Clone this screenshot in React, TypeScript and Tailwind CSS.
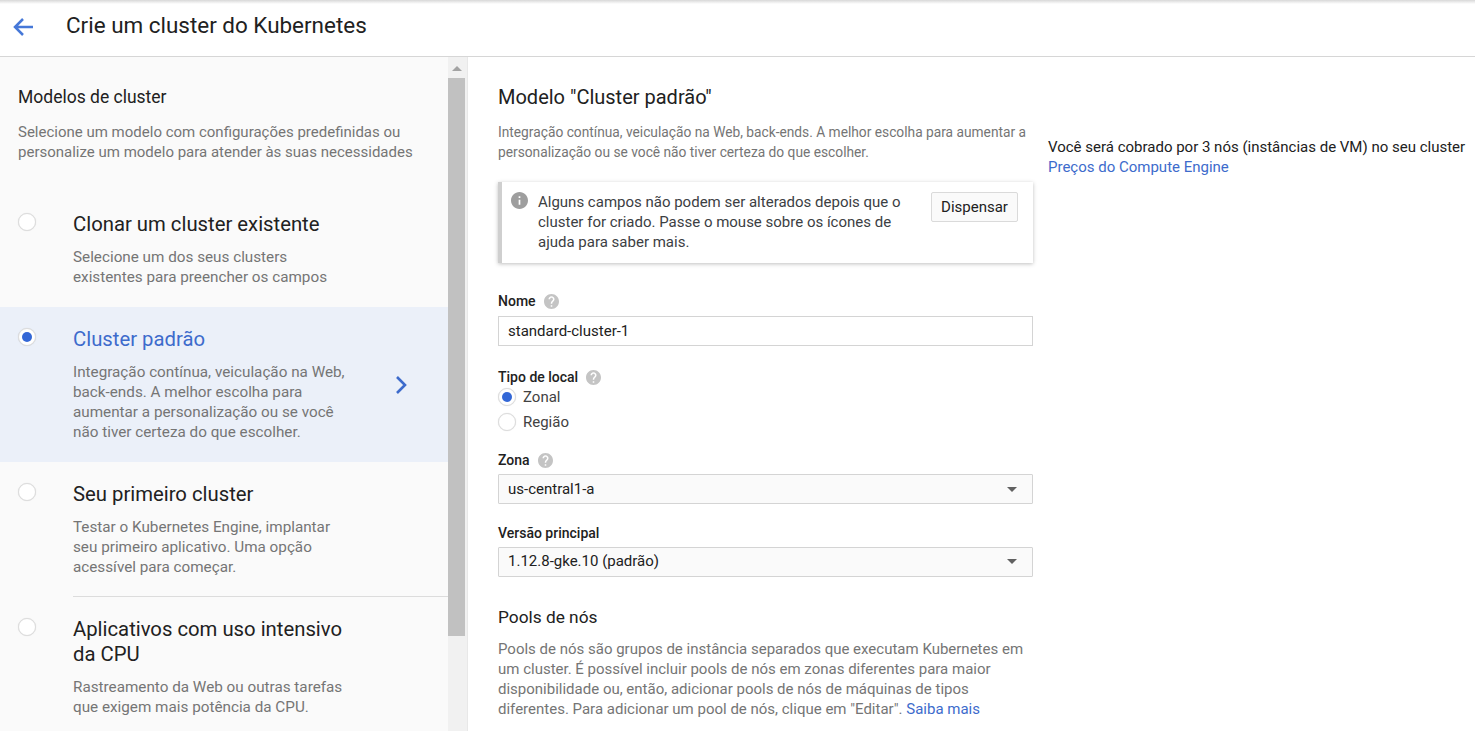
import React from "react";

const HELP = "M12 2C6.48 2 2 6.48 2 12s4.48 10 10 10 10-4.48 10-10S17.52 2 12 2zm1 17h-2v-2h2v2zm2.07-7.75l-.9.92C13.45 12.9 13 13.5 13 15h-2v-.5c0-1.1.45-2.1 1.17-2.83l1.24-1.26c.37-.36.59-.86.59-1.41 0-1.1-.9-2-2-2s-2 .9-2 2H8c0-2.21 1.79-4 4-4s4 1.79 4 4c0 .88-.36 1.68-.93 2.25z";
const INFO = "M12 2C6.48 2 2 6.48 2 12s4.48 10 10 10 10-4.48 10-10S17.52 2 12 2zm1 15h-2v-6h2v6zm0-8h-2V7h2v2z";

function Radio({ on }: { on?: boolean }) {
  return (
    <span className="flex h-[18px] w-[18px] shrink-0 items-center justify-center rounded-full border border-[#dcdcdc] bg-white shadow-[0_0_1px_rgba(0,0,0,0.15)]">
      {on && <span className="h-[10px] w-[10px] rounded-full bg-[#3367d6]" />}
    </span>
  );
}

function Help() {
  return (
    <svg viewBox="2 2 20 20" className="ml-2 h-[15px] w-[15px] fill-[#c4c4c4]">
      <path d={HELP} />
    </svg>
  );
}

function Label({ children, help, className }: { children: React.ReactNode; help?: boolean; className: string }) {
  return (
    <div className={`flex h-5 items-center text-[14px] font-medium leading-5 text-[#212121] ${className}`}>
      {children}
      {help && <Help />}
    </div>
  );
}

function Select({ value, className }: { value: string; className: string }) {
  return (
    <div className={`flex h-[30px] items-center justify-between rounded-[1px] border border-[#d4d4d4] bg-[#fafafa] pl-[9px] pr-[15px] text-[15px] text-[#212121] ${className}`}>
      <span>{value}</span>
      <span className="h-0 w-0 border-x-[5px] border-t-[5px] border-x-transparent border-t-[#616161]" />
    </div>
  );
}

function Item({
  title,
  desc,
  active,
  chevron,
  className = "",
}: {
  title: React.ReactNode;
  desc: React.ReactNode;
  active?: boolean;
  chevron?: boolean;
  className?: string;
}) {
  return (
    <div className={`flex items-stretch pl-[18px] pt-5 ${active ? "bg-[#ebf0f9]" : ""} ${className}`}>
      <div className="pt-[1px]">
        <Radio on={active} />
      </div>
      <div className="ml-[37px]">
        <div className={`text-[20.3px] leading-[25px] ${active ? "text-[#3d6bcc]" : "text-[#212121]"}`}>{title}</div>
        <p className="mt-[10px] text-[15.25px] leading-5 text-[#757575]">{desc}</p>
      </div>
      {chevron && (
        <div className="ml-auto mr-[39px] flex items-center">
          <svg width="16" height="20" viewBox="0 0 16 20" fill="none" stroke="#3d6bcc" strokeWidth="2.6">
            <path d="M4 2l8 8-8 8" />
          </svg>
        </div>
      )}
    </div>
  );
}

export default function App() {
  return (
    <div className="flex h-[731px] w-[1475px] flex-col overflow-hidden bg-white font-['Roboto',sans-serif]">
      <header className="flex h-[57px] shrink-0 items-center border-b border-[#d6d6d6] bg-[linear-gradient(#d8d8d8_0,#ffffff_4px)] pb-[5px]">
        <svg width="22" height="22" viewBox="0 0 22 22" fill="none" stroke="#4678d8" strokeWidth="2.5" className="ml-3 mt-[2px]">
          <path d="M21 11H3M11 3l-8 8 8 8" />
        </svg>
        <h1 className="ml-[32px] text-[22.45px] font-normal text-[#212121]">Crie um cluster do Kubernetes</h1>
      </header>
      <div className="flex min-h-0 flex-1">
        <aside className="flex w-[468px] shrink-0 border-r border-[#e8e8e8] bg-[#fafafa]">
          <div className="w-[448px] shrink-0 overflow-hidden">
            <div className="pl-[18px] pt-[28px]">
              <h2 className="text-[17.5px] font-normal leading-6 text-[#212121]">Modelos de cluster</h2>
              <p className="mt-[13px] text-[15px] leading-5 text-[#757575]">
                Selecione um modelo com configurações predefinidas ou
                <br />
                personalize um modelo para atender às suas necessidades
              </p>
            </div>
            <Item
              className="mt-[30px] pb-5"
              title="Clonar um cluster existente"
              desc={<>Selecione um dos seus clusters<br />existentes para preencher os campos</>}
            />
            <Item
              active
              chevron
              className="pb-5"
              title="Cluster padrão"
              desc={<>Integração contínua, veiculação na Web,<br />back-ends. A melhor escolha para<br />aumentar a personalização ou se você<br />não tiver certeza do que escolher.</>}
            />
            <Item
              className="pb-[19px]"
              title="Seu primeiro cluster"
              desc={<>Testar o Kubernetes Engine, implantar<br />seu primeiro aplicativo. Uma opção<br />acessível para começar.</>}
            />
            <div className="ml-[73px] h-px bg-[#dcdcdc]" />
            <Item
              title={<>Aplicativos com uso intensivo<br />da CPU</>}
              desc={<>Rastreamento da Web ou outras tarefas<br />que exigem mais potência da CPU.</>}
            />
          </div>
          <div className="flex-1 bg-[#f1f1f1] pr-[2px]">
            <div className="flex h-[21px] items-center justify-center pt-[1px]">
              <span className="h-0 w-0 border-x-[5px] border-b-[5px] border-x-transparent border-b-[#a3a3a3]" />
            </div>
            <div className="h-[558px] bg-[#c1c1c1]" />
          </div>
        </aside>
        <main className="flex min-w-0 flex-1 pl-[30px] pt-[28px]">
          <div className="w-[535px] shrink-0">
            <h2 className="text-[20px] font-normal leading-6 text-[#212121]">Modelo "Cluster padrão"</h2>
            <p className="mt-[13px] text-[13.75px] leading-5 text-[#757575]">
              Integração contínua, veiculação na Web, back-ends. A melhor escolha para aumentar a
              <br />
              personalização ou se você não tiver certeza do que escolher.
            </p>
            <div className="mt-5 flex h-[81px] border-l-4 border-[#cfcfcf] bg-white pl-[9px] shadow-[0_1px_4px_rgba(0,0,0,0.25)]">
              <svg viewBox="2 2 20 20" className="mt-[10px] h-[17px] w-[17px] shrink-0 fill-[#9e9e9e]">
                <path d={INFO} />
              </svg>
              <p className="ml-[10px] mt-[10px] text-[15px] leading-5 text-[#3c4043]">
                Alguns campos não podem ser alterados depois que o
                <br />
                cluster for criado. Passe o mouse sobre os ícones de
                <br />
                ajuda para saber mais.
              </p>
              <button className="ml-auto mr-[15px] mt-[10px] h-[30px] w-[87px] rounded-[2px] border border-[#dadada] bg-[#fafafa] text-[15px] text-[#212121]">
                Dispensar
              </button>
            </div>
            <Label help className="mt-[28px]">Nome</Label>
            <div className="mt-[5px] flex h-[30px] items-center border border-[#d4d4d4] bg-white pl-[9px] text-[15px] text-[#212121]">
              standard-cluster-1
            </div>
            <Label help className="mt-[21px]">Tipo de local</Label>
            <div className="flex h-5 items-center gap-[7px] text-[15px] text-[#424242]">
              <Radio on />
              Zonal
            </div>
            <div className="mt-[5px] flex h-5 items-center gap-[7px] text-[15px] text-[#424242]">
              <Radio />
              Região
            </div>
            <Label help className="mt-[18px]">Zona</Label>
            <Select className="mt-1" value="us-central1-a" />
            <Label className="mt-[19px]">Versão principal</Label>
            <Select className="mt-1 pb-[2px]" value="1.12.8-gke.10 (padrão)" />
            <h2 className="mt-[28px] text-[17.3px] font-normal leading-6 text-[#212121]">Pools de nós</h2>
            <p className="mt-[10px] text-[15px] leading-5 text-[#757575]">
              Pools de nós são grupos de instância separados que executam Kubernetes em
              <br />
              um cluster. É possível incluir pools de nós em zonas diferentes para maior
              <br />
              disponibilidade ou, então, adicionar pools de nós de máquinas de tipos
              <br />
              diferentes. Para adicionar um pool de nós, clique em "Editar". <span className="text-[#3d6bcc]">Saiba mais</span>
            </p>
          </div>
          <div className="ml-[15px] whitespace-nowrap pt-[52px] text-[15px] leading-5 text-[#212121]">
            Você será cobrado por 3 nós (instâncias de VM) no seu cluster
            <br />
            <span className="text-[#3d6bcc]">Preços do Compute Engine</span>
          </div>
        </main>
      </div>
    </div>
  );
}
